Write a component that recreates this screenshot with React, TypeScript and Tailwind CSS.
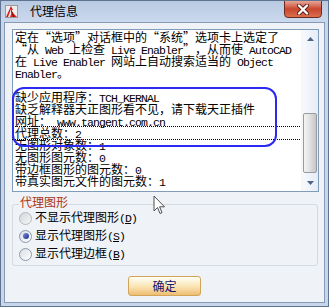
import React from "react";

const MONO = "font-['Liberation_Mono',monospace] text-[11.5px] tracking-[-0.9px]";

function Rich({ text }: { text: string }) {
  const out: React.ReactNode[] = [];
  let buf = "";
  let mode: "a" | "c" | null = null;
  let k = 0;
  const flush = () => {
    if (!buf) return;
    if (mode === "a") {
      out.push(
        <span key={k++} className={MONO}>
          {buf}
        </span>
      );
    } else {
      out.push(<span key={k++}>{buf}</span>);
    }
    buf = "";
  };
  for (const ch of text) {
    if (ch === "\u201C" || ch === "\u201D") {
      flush();
      mode = null;
      out.push(
        <span
          key={k++}
          className={
            "inline-block w-[12px] " + (ch === "\u201C" ? "text-right" : "text-left")
          }
        >
          {ch}
        </span>
      );
      continue;
    }
    const m: "a" | "c" = ch.charCodeAt(0) < 128 ? "a" : "c";
    if (m !== mode) {
      flush();
      mode = m;
    }
    buf += ch;
  }
  flush();
  return <>{out}</>;
}

const lines = [
  "定在“选项”对话框中的“系统”选项卡上选定了",
  "“从 Web 上检查 Live Enabler”，从而使 AutoCAD",
  "在 Live Enabler 网站上自动搜索适当的 Object",
  "Enabler。",
  "",
  "缺少应用程序：TCH_KERNAL",
  "缺乏解释器天正图形看不见，请下载天正插件",
  "网址： www.tangent.com.cn",
  "代理总数：2",
  "无图形对象数：1",
  "无图形图元数：0",
  "带边框图形的图元数：0",
  "带真实图元文件的图元数：1",
];

function Radio({ checked, dim }: { checked?: boolean; dim?: boolean }) {
  return (
    <span
      className={
        "w-[13px] h-[13px] rounded-full border flex items-center justify-center shrink-0 " +
        (dim
          ? "border-[#b4b9c0] bg-gradient-to-br from-[#d4d6d9] to-[#f7f7f7]"
          : "border-[#8b99ad] bg-gradient-to-br from-[#d9dde3] to-[#ffffff]")
      }
    >
      {checked && (
        <span className="w-[6px] h-[6px] rounded-full bg-gradient-to-br from-[#7d8fe0] to-[#1c2a8e]" />
      )}
    </span>
  );
}

function RadioRow({
  label,
  mn,
  checked,
  dim,
}: {
  label: string;
  mn: string;
  checked?: boolean;
  dim?: boolean;
}) {
  return (
    <div className="h-[12px] flex items-center gap-[3px]">
      <Radio checked={checked} dim={dim} />
      <span className="leading-[12px] whitespace-pre text-black">
        <Rich text={label} />
        <span className={MONO}>(</span>
        <span className={MONO + " underline underline-offset-1"}>{mn}</span>
        <span className={MONO}>)</span>
      </span>
    </div>
  );
}

export default function App() {
  return (
    <div className="relative w-[329px] h-[307px] bg-[#c7d6ea] border border-[#5f7491] flex flex-col font-['Noto_Sans_CJK_SC','Noto_Sans',sans-serif] text-[12px] text-black overflow-hidden">
      {/* Title bar */}
      <div className="h-[21px] flex items-start bg-gradient-to-b from-[#b8cae3] to-[#cbd9ed] pl-[4px]">
        <svg className="mt-[4px]" width="13" height="13" viewBox="0 0 13 13">
          <rect x="0.5" y="0.5" width="12" height="12" fill="#eeeeee" stroke="#9a9a9a" />
          <path d="M1 12 L6 1 L8 5 L6.5 5 L6 4 L3 12 Z" fill="#d21a1a" />
          <path d="M7 7 L12 12 L5 12 Z" fill="#e02020" />
          <path d="M6 4 L10 12 L8 12 L6 7 Z" fill="#a01010" />
        </svg>
        <span className="ml-[12px] mt-[3px] leading-[14px] text-[12px] text-black">代理信息</span>
        <div className="flex-1" />
        <div className="mr-[6px] -mt-[1px] w-[38px] h-[18px] rounded-b-[4px] border border-[#6d2a1f] bg-gradient-to-b from-[#e6a596] via-[#c8462e] to-[#d9704e] flex items-center justify-center">
          <svg width="14" height="11" viewBox="0 0 14 11">
            <path d="M3 1.5 L11 9.5 M11 1.5 L3 9.5" stroke="#5a1a10" strokeWidth="4" strokeLinecap="round" />
            <path d="M3 1.5 L11 9.5 M11 1.5 L3 9.5" stroke="#ffffff" strokeWidth="2.4" strokeLinecap="round" />
          </svg>
        </div>
      </div>

      {/* Body */}
      <div className="flex-1 mx-[3px] mb-[3px] border border-[#8799b3] bg-[#eff2f6] flex flex-col">
        {/* Text box */}
        <div className="relative ml-[7px] mt-[6px] w-[307px] h-[163px] border border-[#7f9db9] bg-white flex">
          <div className="flex-1 pt-[1px]">
            {lines.map((l, i) => (
              <div
                key={i}
                className={
                  "h-[12px] leading-[12px] pl-[2px] whitespace-pre " +
                  (i === 8 ? "outline-1 outline-dotted outline-black" : "")
                }
              >
                <Rich text={l} />
              </div>
            ))}
          </div>
          {/* Scrollbar */}
          <div className="w-[17px] flex flex-col bg-gradient-to-r from-[#f7f9fd] to-[#e6edf7] border-l border-[#f2f5fa]">
            <div className="h-[17px] flex items-center justify-center">
              <svg width="7" height="4" viewBox="0 0 7 4">
                <path d="M0 4 L3.5 0 L7 4 Z" fill="#4f6287" />
              </svg>
            </div>
            <div className="flex-1 flex flex-col px-[1px]">
              <div className="mt-[66px] h-[60px] rounded-[2px] border border-[#9a9a9a] bg-gradient-to-r from-[#f4f4f4] via-[#e0e0e0] to-[#c6c6c6]" />
            </div>
            <div className="h-[17px] flex items-center justify-center">
              <svg width="7" height="4" viewBox="0 0 7 4">
                <path d="M0 0 L3.5 4 L7 0 Z" fill="#4f6287" />
              </svg>
            </div>
          </div>
          {/* Blue annotation */}
          <div className="absolute left-[-1px] top-[57px] w-[265px] h-[60px] rounded-[12px] border-2 border-[#2a2af2] pointer-events-none" />
        </div>

        {/* Group box */}
        <fieldset className="ml-[7px] mt-[4px] w-[306px] border border-[#d3dae2] rounded-[3px] px-[6px] pb-[5px]">
          <legend className="ml-[0px] px-[1px] leading-[12px] pb-[4px] text-[#a83220]">代理图形</legend>
          <div className="flex flex-col gap-[6px]">
            <RadioRow label="不显示代理图形" mn="D" dim />
            <RadioRow label="显示代理图形" mn="S" checked />
            <RadioRow label="显示代理边框" mn="B" />
          </div>
        </fieldset>

        {/* OK button */}
        <div className="mt-[10px] flex justify-center">
          <div className="w-[73px] h-[20px] rounded-[3px] border border-[#d2a457] bg-gradient-to-b from-[#fffef6] via-[#fbe7b8] to-[#efbd72] flex items-center justify-center text-[#14146e] leading-[14px]">
            确定
          </div>
        </div>
      </div>

      {/* Mouse cursor */}
      <svg className="absolute left-[152px] top-[194px] pointer-events-none" width="13" height="21" viewBox="0 0 13 21">
        <path d="M1 1 L1 16 L4.5 12.5 L7 18.5 L9 17.6 L6.6 11.8 L11.5 11.8 Z" fill="#ffffff" stroke="#505050" strokeWidth="1" strokeLinejoin="round" />
      </svg>
    </div>
  );
}
